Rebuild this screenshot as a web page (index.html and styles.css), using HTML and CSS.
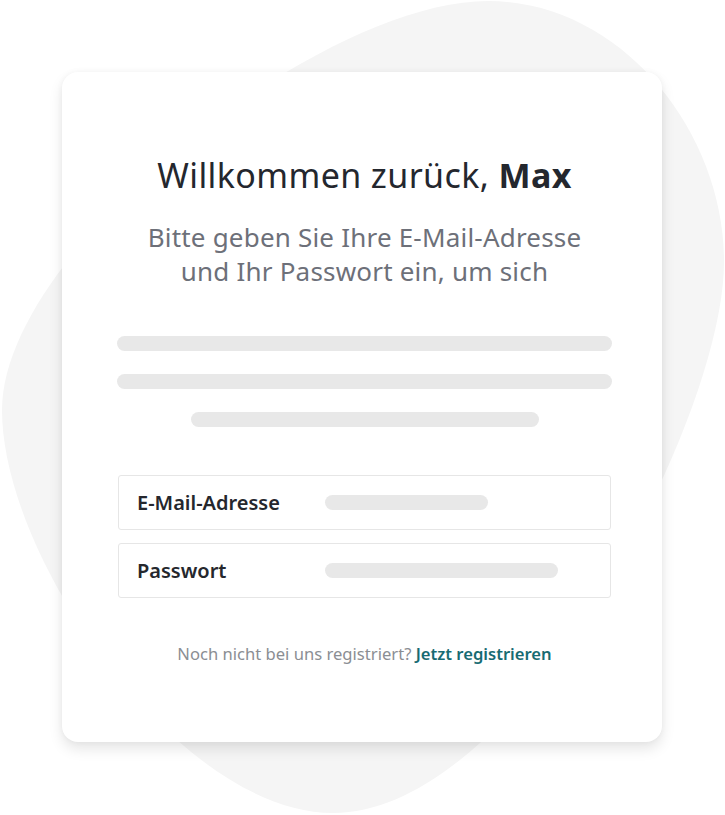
FILE: index.html
```html
<!DOCTYPE html>
<html lang="de">
<head>
<meta charset="utf-8">
<title>Anmelden</title>
<link rel="stylesheet" href="styles.css">
</head>
<body>
<div class="stage">
  <svg class="blob" width="725" height="815" viewBox="0 0 725 815" aria-hidden="true">
    <path d="M488,1 C620,1 724,130 724,262 C724,420 520,813 333,813 C180,813 2,560 2,410 C2,250 320,1 488,1 Z" fill="#f5f5f5"/>
  </svg>
  <main class="card">
    <h1 class="title">Willkommen zurück, <strong>Max</strong></h1>
    <p class="subtitle">Bitte geben Sie Ihre E-Mail-Adresse<br>und Ihr Passwort ein, um sich</p>
    <div class="skeleton">
      <span class="bar bar-full"></span>
      <span class="bar bar-full"></span>
      <span class="bar bar-short"></span>
    </div>
    <form class="fields">
      <div class="field">
        <span class="label">E-Mail-Adresse</span>
        <span class="bar bar-email"></span>
      </div>
      <div class="field">
        <span class="label">Passwort</span>
        <span class="bar bar-pass"></span>
      </div>
    </form>
    <p class="footer">Noch nicht bei uns registriert? <a class="link" href="#">Jetzt registrieren</a></p>
  </main>
</div>
</body>
</html>
```

FILE: styles.css
```css
* { box-sizing: border-box; }
html, body { margin: 0; padding: 0; background: #ffffff; }
body { font-family: "Noto Sans", "Open Sans", sans-serif; }

.stage {
  position: relative;
  width: 725px;
  height: 815px;
  overflow: hidden;
  padding-top: 72px;
  padding-left: 62px;
}

.blob {
  position: absolute;
  left: 0;
  top: 0;
}

.card {
  position: relative;
  width: 600px;
  height: 670px;
  background: #ffffff;
  border-radius: 16px;
  box-shadow: 0 7px 14px rgba(0, 0, 0, 0.10), 0 0 6px rgba(0, 0, 0, 0.04);
  padding: 76px 50px 0 55px;
  display: flex;
  flex-direction: column;
  align-items: center;
}

.title {
  margin: 0;
  font-size: 34px;
  font-weight: 400;
  line-height: 54px;
  color: #24272e;
  text-align: center;
  letter-spacing: 0.4px;
}
.title strong { font-weight: 700; }

.subtitle {
  margin: 18px 0 0;
  font-size: 26px;
  line-height: 34px;
  color: #6d7079;
  text-align: center;
  letter-spacing: 0.2px;
}

.skeleton {
  width: 100%;
  margin-top: 48px;
  display: flex;
  flex-direction: column;
  align-items: center;
  gap: 23px;
}

.bar {
  display: block;
  height: 15px;
  border-radius: 8px;
  background: #e8e8e8;
}
.bar-full { width: 495px; }
.bar-short { width: 348px; }

.fields {
  width: 100%;
  margin: 48px 0 0;
  display: flex;
  flex-direction: column;
  gap: 13px;
}

.field {
  height: 55px;
  margin: 0 1px;
  border: 1px solid #e6e6e6;
  border-radius: 3px;
  display: flex;
  align-items: center;
  padding-left: 18px;
}

.label {
  width: 188px;
  font-size: 20px;
  font-weight: 600;
  color: #25272d;
}

.bar-email { width: 163px; }
.bar-pass { width: 233px; }

.footer {
  margin: 44px 0 0;
  font-size: 16.6px;
  color: #8b8e93;
  text-align: center;
}
.link {
  color: #176b72;
  font-weight: 600;
  text-decoration: none;
}
```
